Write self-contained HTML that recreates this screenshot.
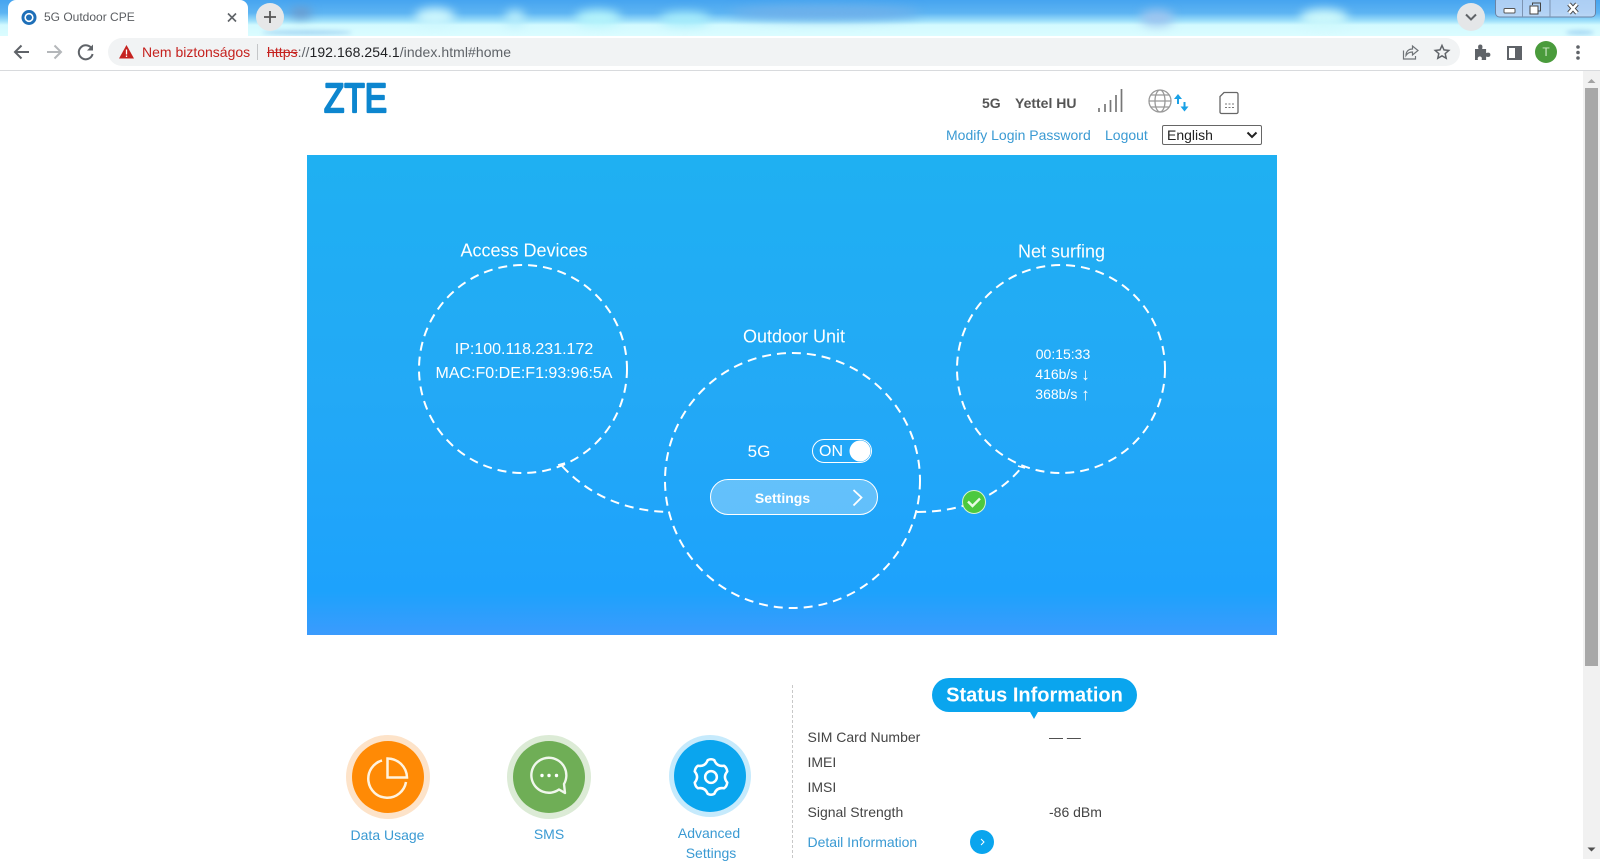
<!DOCTYPE html>
<html><head><meta charset="utf-8"><title>5G Outdoor CPE</title>
<style>
html,body{margin:0;padding:0;width:1600px;height:859px;overflow:hidden;background:#fff;font-family:"Liberation Sans",sans-serif}
.a{position:absolute;white-space:nowrap}
.c{transform:translate(-50%,-50%)}
.l{transform:translateY(-50%)}
#strip{left:0;top:0;width:1600px;height:37px;overflow:hidden;background:linear-gradient(180deg,#46a4f0 0,#5db4f2 13px,#9fe0fa 21px,#d2faff 25px,#dcfcff 37px)}
.b{position:absolute;border-radius:50%;filter:blur(5px)}
.lnk{color:#3a9ad3;font-size:14px}
.t{color:#444;font-size:14px}
.ar{font-size:17px;line-height:0;vertical-align:-1px}
</style></head><body>
<div class="a" id="strip">
<div class="b" style="left:415px;top:8px;width:40px;height:18px;background:#cdf6fd"></div>
<div class="b" style="left:505px;top:10px;width:20px;height:16px;background:#b6ecfb"></div>
<div class="b" style="left:575px;top:10px;width:46px;height:16px;background:#b5f4fb"></div>
<div class="b" style="left:660px;top:12px;width:50px;height:14px;background:#a6ecfb"></div>
<div class="b" style="left:730px;top:6px;width:190px;height:14px;background:#6fb0ea"></div>
<div class="b" style="left:1140px;top:10px;width:34px;height:16px;background:#9dc4ef"></div>
<div class="b" style="left:1300px;top:9px;width:48px;height:18px;background:#cdf8fb"></div>
<div class="b" style="left:290px;top:8px;width:22px;height:10px;background:#6d97c7"></div>
<div class="b" style="left:262px;top:30px;width:90px;height:5px;background:#a8d8f4;filter:blur(2px)"></div>
<div class="b" style="left:1566px;top:30px;width:28px;height:5px;background:#a8d8f4;filter:blur(2px)"></div>
</div>
<!-- tab -->
<div class="a" style="left:8px;top:0;width:240px;height:37px;background:#fff;border-radius:8px 8px 0 0"></div>
<div class="a" style="left:0;top:36px;width:1600px;height:34px;background:#fff"></div>
<div class="a" style="left:0;top:70px;width:1600px;height:1px;background:#d8dadd"></div>
<div class="a l" style="left:44px;top:17px;font-size:12px;color:#5b5e62">5G Outdoor CPE</div>
<svg class="a" style="left:0;top:0" width="1600" height="72" viewBox="0 0 1600 72" fill="none">
<circle cx="29" cy="17.5" r="7.5" fill="#1e6fb8"/><circle cx="29" cy="17.5" r="3.8" stroke="#fff" stroke-width="1.6"/>
<path d="M228 13.5l8 8M236 13.5l-8 8" stroke="#5f6368" stroke-width="1.6"/>
<circle cx="270" cy="17" r="14" fill="#e6e7e8"/><path d="M270 11v12M264 17h12" stroke="#555" stroke-width="1.8"/>
<circle cx="1471" cy="17" r="14" fill="#e4e6e8"/><path d="M1466 14.5l5 5 5-5" stroke="#5f6368" stroke-width="2"/>
<rect x="1495.5" y="-3" width="100" height="20" rx="4" fill="#cfdcf6" fill-opacity=".75" stroke="#6b84a5"/>
<path d="M1522.5 0v17M1550 0v17" stroke="#7d94b2"/>
<rect x="1504" y="8.5" width="11" height="4.5" rx="1" fill="#fff" stroke="#555"/>
<rect x="1530" y="6" width="8" height="8" fill="#fff" stroke="#444"/><path d="M1532.5 5V3h8v8h-2" stroke="#444"/>
<path d="M1569 4l8 9M1577 4l-8 9" stroke="#444" stroke-width="4.5"/><path d="M1569 4l8 9M1577 4l-8 9" stroke="#fff" stroke-width="2.6"/>
<rect x="108" y="38" width="1352" height="28" rx="14" fill="#f1f3f4"/>
<path d="M29 52H15.5M21.5 45.5L15 52l6.5 6.5" stroke="#5f6368" stroke-width="2"/>
<path d="M47 52h13.5M54.5 45.5L61 52l-6.5 6.5" stroke="#b4b7ba" stroke-width="2"/>
<path d="M92 49a7 7 0 1 0 .6 5" stroke="#5f6368" stroke-width="2"/><path d="M93 44.5v6h-6z" fill="#5f6368"/>
<path d="M126.500 45l7.500 13.500h-15z" fill="#c5221f"/><path d="M126.500 49.500v5M126.500 55.500v1.500" stroke="#fff" stroke-width="1.300"/>
<path d="M257.500 44v16" stroke="#c4c6c8"/>
<path d="M1403.500 50.500v8.500h12v-3M1406 55.500c0-4.500 3-6.500 6.500-6.500V46l5.500 4.500-5.500 4.500v-3c-3 0-5 1-6.500 3.500z" stroke="#6f7377" stroke-width="1.200"/>
<path d="M1442 45.500l2 4.400 4.800.5-3.600 3.200 1 4.700-4.200-2.400-4.200 2.400 1-4.700-3.600-3.200 4.800-.5z" stroke="#5f6368" stroke-width="1.500"/>
<path d="M1475 49h3.500c-1-3 0-4.500 1.800-4.500s2.800 1.500 1.800 4.500h4v4c3-1 4.300 0 4.300 1.800s-1.300 2.800-4.300 1.800V60h-4.500c.8-2.500-.3-3.500-1.800-3.500s-2.600 1-1.800 3.500H1475z" fill="#5f6368"/>
<rect x="1508" y="47" width="13" height="12" stroke="#5f6368" stroke-width="2"/><rect x="1515" y="47" width="7" height="12" fill="#5f6368"/>
<circle cx="1546" cy="52" r="11" fill="#4a9b3c"/>
<circle cx="1578" cy="47" r="1.800" fill="#5f6368"/><circle cx="1578" cy="52.500" r="1.800" fill="#5f6368"/><circle cx="1578" cy="58" r="1.800" fill="#5f6368"/>
</svg>
<div class="a c" style="left:1546px;top:52px;color:#cfe8c8;font-size:12px">T</div>
<div class="a l" style="left:142px;top:52px;font-size:14px;color:#c5221f">Nem biztonságos</div>
<div class="a l" style="left:267px;top:52px;font-size:14px;color:#5f6368;letter-spacing:.055px"><span style="color:#c5221f;text-decoration:line-through">https</span>://<span style="color:#202124">192.168.254.1</span>/index.html#home</div>
<!-- scrollbar -->
<div class="a" style="left:1583px;top:71px;width:17px;height:788px;background:#f1f1f1"></div>
<div class="a" style="left:1585px;top:88px;width:13px;height:578px;background:#a8a8a8"></div>
<svg class="a" style="left:1583px;top:71px" width="17" height="788"><path d="M4.500 12l4-4 4 4z" fill="#a3a3a3"/><path d="M4.500 776.500l4 4 4-4z" fill="#505050"/></svg>
<!-- logo -->
<svg class="a" style="left:318px;top:76px" width="76" height="42"><text x="6" y="36" font-family="Liberation Sans" font-size="41" fill="#0d86cf" stroke="#0d86cf" stroke-width="2.200" stroke-linejoin="round" textLength="63" lengthAdjust="spacingAndGlyphs">ZTE</text></svg>
<!-- header right -->
<div class="a l" style="left:982px;top:103px;font-size:14px;font-weight:bold;color:#555">5G</div>
<div class="a l" style="left:1015px;top:103px;font-size:14px;font-weight:bold;color:#555">Yettel HU</div>
<svg class="a" style="left:0;top:80px" width="1300" height="40" fill="none">
<g stroke="#777" stroke-width="1.700"><path d="M1099 32v-4M1105 32v-8M1110.500 32v-12M1116 32v-17M1121.500 32V9"/></g>
<g stroke="#999" stroke-width="1.300"><circle cx="1160" cy="21" r="11"/><ellipse cx="1160" cy="21" rx="5" ry="11"/><path d="M1149 21h22M1151 15h18M1151 27h18"/></g>
<path d="M1178 24v-6M1184.500 22v6" stroke="#1aa1e6" stroke-width="2"/><path d="M1174 19l4-5 4 5zM1180.500 26.500h8l-4 5z" fill="#1aa1e6"/>
<path d="M1224 12.500h12.500a1.500 1.500 0 0 1 1.500 1.500v18a1.500 1.500 0 0 1-1.500 1.500h-15a1.500 1.500 0 0 1-1.500-1.500V16.500z" stroke="#666" stroke-width="1.300"/>
<path d="M1225 24h2M1228.500 24h2M1232 24h2M1225 27.500h2M1228.500 27.500h2M1232 27.500h2" stroke="#777"/>
</svg>
<div class="a l lnk" style="left:946px;top:135px">Modify Login Password</div>
<div class="a l lnk" style="left:1105px;top:135px">Logout</div>
<div class="a" style="left:1162px;top:125px;width:98px;height:18px;border:1px solid #666;border-radius:2px;background:#fff"></div>
<div class="a l" style="left:1167px;top:135px;font-size:14px;color:#222">English</div>
<svg class="a" style="left:1246px;top:131px" width="12" height="9" fill="none"><path d="M1.500 1.500L6 6l4.500-4.500" stroke="#222" stroke-width="2"/></svg>
<!-- hero -->
<div class="a" style="left:307px;top:155px;width:970px;height:480px;background:linear-gradient(180deg,#1fb0f2 0,#23a9f6 50%,#1da2fc 91%,#3b9bfd 100%)"></div>
<svg class="a" style="left:0;top:0" width="1600" height="859" fill="none">
<g stroke="#fff" stroke-width="2" stroke-dasharray="9 6">
<circle cx="523" cy="369" r="104"/>
<circle cx="792.500" cy="480.500" r="127.500"/>
<circle cx="1061" cy="369" r="104"/>
<path d="M562 466Q603 510 668 512"/>
<path d="M917 512Q985 512 1022 467"/>
</g>
<path d="M558 465l7-2M1018 466l7 2" stroke="#fff" stroke-width="1.500"/>
<rect x="710.500" y="479.500" width="167" height="35" rx="17.500" fill="#fff" fill-opacity=".3" stroke="#fff"/>
<path d="M853.500 490l8 7.500-8 8" stroke="#fff" stroke-width="1.800"/>
<rect x="812.500" y="439.500" width="59" height="23" rx="11.500" stroke="#fff"/>
<circle cx="860" cy="451" r="10.500" fill="#fff"/>
<circle cx="974" cy="502" r="11.500" fill="#4cc93e" stroke="#d8f5d0"/>
<path d="M968 501.500l4.500 4.500 7.500-7.500" stroke="#e8fbe2" stroke-width="2.400"/>
<!-- action icons -->
<circle cx="388" cy="777" r="42" fill="#fde3c9"/><circle cx="388" cy="777" r="36" fill="#ff8a05"/>
<path d="M382 760.500A19 19 0 1 0 406 782" stroke="#fff3df" stroke-width="2.500"/>
<path d="M387.500 758.500V777.500H407A19.500 19.500 0 0 0 387.500 758.500z" stroke="#fff3df" stroke-width="2.500"/>
<circle cx="549" cy="777" r="42" fill="#dcebd6"/><circle cx="549" cy="777" r="36" fill="#6fae56"/>
<path d="M559 789.500A17.500 17.500 0 1 1 564 784L565 793z" stroke="#f0f7ec" stroke-width="2.400" stroke-linejoin="round"/>
<circle cx="542" cy="775.500" r="1.700" fill="#fff"/><circle cx="549" cy="775.500" r="1.700" fill="#fff"/><circle cx="556.500" cy="775.500" r="1.700" fill="#fff"/>
<circle cx="710" cy="776" r="41" fill="#c6eafc"/><circle cx="710" cy="776" r="36" fill="#0aa5ee"/>
<g transform="translate(711 777) scale(.93)" stroke="#fff" stroke-width="2.700" stroke-linejoin="round"><path d="M-3.500-18.200Q0-20 3.500-18.200Q6.250-10.800 14-12.100Q16.800-10.500 17.500-6Q12.500 0 17.500 6Q16.800 10.500 14 12.100Q6.250 10.800 3.500 18.200Q0 20-3.500 18.200Q-6.250 10.800-14 12.100Q-16.800 10.500-17.500 6Q-12.500 0-17.500-6Q-16.800-10.500-14-12.100Q-6.250-10.800-3.500-18.200z"/><circle r="6.300"/></g>
<!-- status -->
<path d="M792.500 685V859" stroke="#c8c8c8" stroke-dasharray="3 2"/>
<rect x="932" y="678" width="205" height="34" rx="17" fill="#0aa5ee"/>
<path d="M1029.500 711h9l-4.500 8z" fill="#0aa5ee"/>
<circle cx="982" cy="842" r="12" fill="#0aa5ee"/>
<path d="M981 839l3 3-3 3" stroke="#fff"/>
</svg>
<div class="a c" style="left:524px;top:251px;color:#fff;font-size:18px">Access Devices</div>
<div class="a c" style="left:1061.500px;top:252px;color:#fff;font-size:18px">Net surfing</div>
<div class="a c" style="left:794px;top:337px;color:#fff;font-size:18px">Outdoor Unit</div>
<div class="a c" style="left:524px;top:350px;color:#fff;font-size:16px">IP:100.118.231.172</div>
<div class="a c" style="left:524px;top:373.500px;color:#fff;font-size:16px">MAC:F0:DE:F1:93:96:5A</div>
<div class="a c" style="left:1063px;top:354px;color:#fff;font-size:14px">00:15:33</div>
<div class="a c" style="left:1062.500px;top:374px;color:#fff;font-size:14px">416b/s <span class="ar">↓</span></div>
<div class="a c" style="left:1062.500px;top:394px;color:#fff;font-size:14px">368b/s <span class="ar">↑</span></div>
<div class="a c" style="left:759px;top:452px;color:#fff;font-size:17px">5G</div>
<div class="a c" style="left:831px;top:452px;color:#fff;font-size:16px">ON</div>
<div class="a c" style="left:782.500px;top:498px;color:#fff;font-size:14px;font-weight:bold">Settings</div>
<div class="a c lnk" style="left:387.500px;top:835px">Data Usage</div>
<div class="a c lnk" style="left:549px;top:834px">SMS</div>
<div class="a c lnk" style="left:709px;top:832.500px">Advanced</div>
<div class="a c lnk" style="left:711px;top:852.500px">Settings</div>
<div class="a c" style="left:1034.500px;top:696px;color:#fff;font-size:20px;font-weight:bold">Status Information</div>
<div class="a l t" style="left:807.500px;top:737px">SIM Card Number</div>
<div class="a l t" style="left:807.500px;top:762px">IMEI</div>
<div class="a l t" style="left:807.500px;top:787px">IMSI</div>
<div class="a l t" style="left:807.500px;top:812px">Signal Strength</div>
<div class="a l t" style="left:1049px;top:737px">— —</div>
<div class="a l t" style="left:1049px;top:812px">-86 dBm</div>
<div class="a l lnk" style="left:807.500px;top:842px">Detail Information</div>
</body></html>
